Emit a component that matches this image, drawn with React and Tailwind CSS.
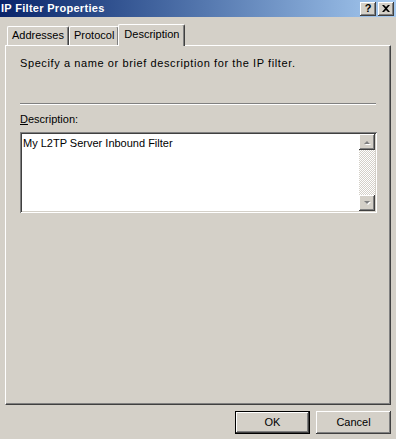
import React from "react";

const raised =
  "shadow-[inset_-1px_-1px_#404040,inset_1px_1px_#ffffff,inset_-2px_-2px_#808080,inset_2px_2px_#d4d0c8]";

const TitleButton = ({ children }) => (
  <div
    className={`w-[16px] h-[14px] bg-[#d4d0c8] flex items-center justify-center ${raised}`}
  >
    {children}
  </div>
);

const ScrollArrow = ({ up }) => (
  <div
    className={`w-[16px] h-[16px] bg-[#d4d0c8] flex items-center justify-center ${raised}`}
  >
    <svg width="7" height="5" viewBox="0 0 7 5">
      {up ? (
        <>
          <path d="M1 5 L4 2 L7 5 Z" fill="#ffffff" />
          <path d="M0 4 L3 1 L6 4 Z" fill="#808080" />
        </>
      ) : (
        <>
          <path d="M1 1 L7 1 L4 4 Z" fill="#ffffff" />
          <path d="M0 0 L6 0 L3 3 Z" fill="#808080" />
        </>
      )}
    </svg>
  </div>
);

const Tab = ({ label, selected }) => (
  <div
    className={
      selected
        ? "relative z-10 h-[22px] -mb-[1px] -ml-[1px] px-[5px] pt-[3px] bg-[#d4d0c8] border-l border-t border-white border-r border-r-[#404040] rounded-t-[2px] shadow-[inset_-1px_0_#808080] text-black"
        : "h-[19px] px-[4px] pt-[2px] bg-[#d4d0c8] border-l border-t border-white border-r border-r-[#404040] rounded-t-[2px] shadow-[inset_-1px_0_#808080] text-black"
    }
  >
    {label}
  </div>
);

const DialogButton = ({ label, isDefault }) => (
  <div
    className={
      isDefault
        ? "w-[75px] h-[23px] border border-black flex"
        : "w-[75px] h-[23px] flex"
    }
  >
    <div
      className={`flex-1 flex items-center justify-center bg-[#d4d0c8] ${raised}`}
    >
      {label}
    </div>
  </div>
);

export default function App() {
  return (
    <div className="w-[396px] h-[439px] bg-[#d4d0c8] flex flex-col overflow-hidden font-['Liberation_Sans',Arial,sans-serif] text-[11px] leading-[13px] text-black">
      {/* Title bar */}
      <div className="h-[17px] shrink-0 flex items-center justify-between pl-[1px] pr-[2px] bg-gradient-to-r from-[#0a246a] to-[#a6caf0]">
        <span className="text-white font-bold text-[11px] tracking-[0.3px]">IP Filter Properties</span>
        <div className="flex gap-[2px]">
          <TitleButton>
            <span className="font-bold text-[11px] leading-none">?</span>
          </TitleButton>
          <TitleButton>
            <svg width="8" height="7" viewBox="0 0 8 7">
              <path d="M0 0 L2 0 L4 2 L6 0 L8 0 L5 3.5 L8 7 L6 7 L4 5 L2 7 L0 7 L3 3.5 Z" fill="#000" />
            </svg>
          </TitleButton>
        </div>
      </div>

      {/* Tabs */}
      <div className="mt-[7px] px-[5px] flex flex-col">
        <div className="h-[21px] flex items-end pl-[2px]">
          <Tab label="Addresses" />
          <Tab label="Protocol" />
          <Tab label="Description" selected />
        </div>

        <div className="h-[360px] bg-[#d4d0c8] border-l border-t border-white border-r border-b border-r-[#404040] border-b-[#404040] shadow-[inset_-1px_-1px_#808080] pl-[14px] pt-[11px]">
          <p className="tracking-[0.6px]">Specify a name or brief description for the IP filter.</p>

          <div className="mt-[33px] w-[356px] border-t border-t-[#808080] border-b border-b-white" />

          <p className="mt-[8px]">
            <span className="underline">D</span>escription:
          </p>

          <div className="mt-[6px] w-[357px] h-[81px] flex bg-white shadow-[inset_1px_1px_#808080,inset_-1px_-1px_#ffffff,inset_2px_2px_#404040,inset_-2px_-2px_#d4d0c8] p-[2px]">
            <div className="flex-1 pl-[1px] pt-[3px]">My L2TP Server Inbound Filter</div>
            <div className="w-[16px] flex flex-col bg-[image:repeating-conic-gradient(#ffffff_0_25%,#d4d0c8_0_50%)] bg-[length:2px_2px]">
              <ScrollArrow up />
              <div className="flex-1" />
              <ScrollArrow />
            </div>
          </div>
        </div>
      </div>

      {/* Buttons */}
      <div className="mt-[6px] flex justify-end gap-[6px] pr-[5px]">
        <DialogButton label="OK" isDefault />
        <DialogButton label="Cancel" />
      </div>
    </div>
  );
}
